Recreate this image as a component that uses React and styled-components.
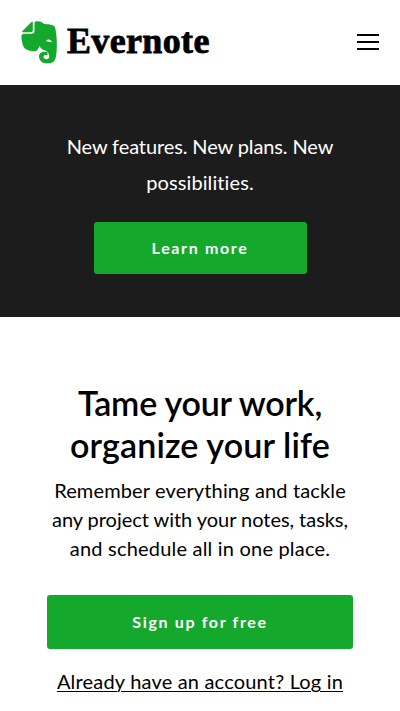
import React from "react";
import styled, { createGlobalStyle } from "styled-components";

const GlobalStyle = createGlobalStyle`
  * { box-sizing: border-box; }
  body {
    margin: 0;
    background: #fff;
    color: #000;
    font-family: Lato, "Open Sans", sans-serif;
    font-variant-ligatures: none;
  }
`;
const Page = styled.div`
  width: 400px;
  height: 711px;
  overflow: hidden;
`;
const Header = styled.header`
  height: 85px;
  padding: 0 21px;
  display: flex;
  align-items: center;
  justify-content: space-between;
`;
const Brand = styled.a`
  display: flex;
  align-items: center;
  gap: 10px;
  svg { display: block; }
`;
const Wordmark = styled.span`
  font: 700 36px/40px "Liberation Serif", serif;
  letter-spacing: 0.35px;
  -webkit-text-stroke: 0.8px #000;
  padding-bottom: 4px;
`;
const MenuButton = styled.button`
  width: 22px;
  height: 16px;
  margin-bottom: 2px;
  padding: 0;
  border: 0;
  background: none;
  display: flex;
  flex-direction: column;
  justify-content: space-between;
`;
const MenuBar = styled.span`
  height: 2px;
  background: #000;
`;
const Banner = styled.section`
  height: 231.5px;
  padding-top: 43px;
  background: #1c1c1c;
  color: #fff;
  display: flex;
  flex-direction: column;
  align-items: center;
`;
const Line = styled.span`
  display: block;
  white-space: nowrap;
  letter-spacing: ${(p) => p.$track || 0}px;
`;
const BannerText = styled.p`
  margin: 0;
  font-size: 20px;
  line-height: 36px;
  text-align: center;
`;
const Button = styled.button`
  width: ${(p) => p.$w}px;
  height: ${(p) => p.$h}px;
  margin-top: ${(p) => p.$top}px;
  padding: 0;
  border: 0;
  border-radius: 3px;
  background: #14a82d;
  color: #fff;
  font: 700 16px/24px Lato, sans-serif;
  letter-spacing: ${(p) => p.$track}px;
`;
const Hero = styled.main`
  padding-top: 65.5px;
  display: flex;
  flex-direction: column;
  align-items: center;
  text-align: center;
`;
const Title = styled.h1`
  margin: 0;
  font-size: 34px;
  font-weight: 600;
  line-height: 42px;
`;
const Lead = styled.p`
  margin: 10px 0 0;
  font-size: 20px;
  line-height: 29px;
`;
const Login = styled.a`
  margin-top: 17px;
  font-size: 20px;
  line-height: 30px;
  letter-spacing: 0.19px;
  text-decoration: underline;
  text-decoration-thickness: 1px;
  text-underline-offset: 2px;
`;

const Elephant = () => (
  <svg width="36" height="43" viewBox="35 33 107 129" fill="#14a82d" aria-hidden="true">
    <path d="M70 38V61Q70 67 64 67H40Q36 67 39 63L65 37Q70 33 70 38Z" />
    <path
      fillRule="evenodd"
      d="M75 37C80 32 97 33 103 42C114 43 130 43 136 50C140 62 142 82 142 102C142 133 140 148 132 155C123 161 103 161 96 155C86 146 87 134 93 129C99 124 108 124 114 127V136C107 134 102 135 102 141C102 149 119 150 119 141C120 131 114 124 106 121C98 118 93 115 90 107C87 117 82 125 71 124C57 122 47 119 43 112C38 102 35 86 36 77C37 72 40 71 46 71H67Q75 71 75 62ZM110 93C112 87 125 86 127 97C120 95 115 96 110 93Z"
    />
  </svg>
);

export default function App() {
  return (
    <Page>
      <GlobalStyle />
      <Header>
        <Brand>
          <Elephant />
          <Wordmark>Evernote</Wordmark>
        </Brand>
        <MenuButton aria-label="Menu">
          <MenuBar />
          <MenuBar />
          <MenuBar />
        </MenuButton>
      </Header>
      <Banner>
        <BannerText>
          <Line $track={-0.11}>New features. New plans. New</Line>
          <Line $track={0.1}>possibilities.</Line>
        </BannerText>
        <Button $w={213} $h={52} $top={22} $track={1.65}>Learn more</Button>
      </Banner>
      <Hero>
        <Title>
          <Line $track={-0.2}>Tame your work,</Line>
          <Line $track={0.15}>organize your life</Line>
        </Title>
        <Lead>
          <Line $track={0.14}>Remember everything and tackle</Line>
          <Line $track={-0.04}>any project with your notes, tasks,</Line>
          <Line $track={0.2}>and schedule all in one place.</Line>
        </Lead>
        <Button $w={306} $h={54} $top={32} $track={1.65}>Sign up for free</Button>
        <Login>Already have an account? Log in</Login>
      </Hero>
    </Page>
  );
}
